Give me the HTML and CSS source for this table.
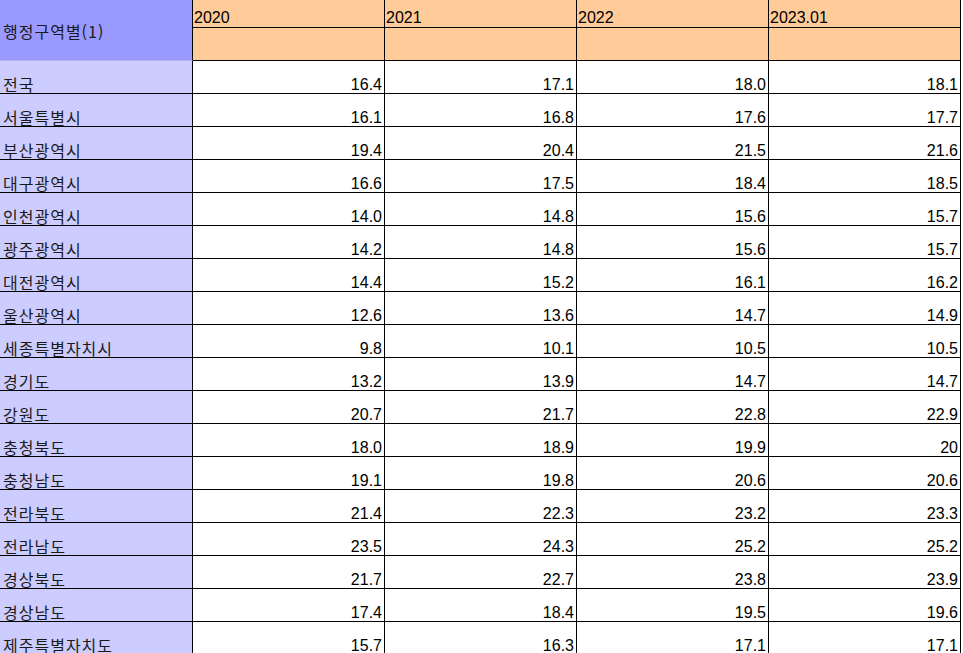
FILE: index.html
```html
<!DOCTYPE html>
<html lang="ko">
<head>
<meta charset="utf-8">
<title>행정구역별</title>
<link rel="stylesheet" href="styles.css">
</head>
<body>
<div class="sheet">
  <div class="cell corner">행정구역별(1)</div>
  <div class="cell year">2020</div>
  <div class="cell year">2021</div>
  <div class="cell year">2022</div>
  <div class="cell year">2023.01</div>
  <div class="cell unit"></div>
  <div class="cell unit"></div>
  <div class="cell unit"></div>
  <div class="cell unit"></div>

  <div class="cell label">전국</div><div class="cell num">16.4</div><div class="cell num">17.1</div><div class="cell num">18.0</div><div class="cell num">18.1</div>
  <div class="cell label">서울특별시</div><div class="cell num">16.1</div><div class="cell num">16.8</div><div class="cell num">17.6</div><div class="cell num">17.7</div>
  <div class="cell label">부산광역시</div><div class="cell num">19.4</div><div class="cell num">20.4</div><div class="cell num">21.5</div><div class="cell num">21.6</div>
  <div class="cell label">대구광역시</div><div class="cell num">16.6</div><div class="cell num">17.5</div><div class="cell num">18.4</div><div class="cell num">18.5</div>
  <div class="cell label">인천광역시</div><div class="cell num">14.0</div><div class="cell num">14.8</div><div class="cell num">15.6</div><div class="cell num">15.7</div>
  <div class="cell label">광주광역시</div><div class="cell num">14.2</div><div class="cell num">14.8</div><div class="cell num">15.6</div><div class="cell num">15.7</div>
  <div class="cell label">대전광역시</div><div class="cell num">14.4</div><div class="cell num">15.2</div><div class="cell num">16.1</div><div class="cell num">16.2</div>
  <div class="cell label">울산광역시</div><div class="cell num">12.6</div><div class="cell num">13.6</div><div class="cell num">14.7</div><div class="cell num">14.9</div>
  <div class="cell label">세종특별자치시</div><div class="cell num">9.8</div><div class="cell num">10.1</div><div class="cell num">10.5</div><div class="cell num">10.5</div>
  <div class="cell label">경기도</div><div class="cell num">13.2</div><div class="cell num">13.9</div><div class="cell num">14.7</div><div class="cell num">14.7</div>
  <div class="cell label">강원도</div><div class="cell num">20.7</div><div class="cell num">21.7</div><div class="cell num">22.8</div><div class="cell num">22.9</div>
  <div class="cell label">충청북도</div><div class="cell num">18.0</div><div class="cell num">18.9</div><div class="cell num">19.9</div><div class="cell num">20</div>
  <div class="cell label">충청남도</div><div class="cell num">19.1</div><div class="cell num">19.8</div><div class="cell num">20.6</div><div class="cell num">20.6</div>
  <div class="cell label">전라북도</div><div class="cell num">21.4</div><div class="cell num">22.3</div><div class="cell num">23.2</div><div class="cell num">23.3</div>
  <div class="cell label">전라남도</div><div class="cell num">23.5</div><div class="cell num">24.3</div><div class="cell num">25.2</div><div class="cell num">25.2</div>
  <div class="cell label">경상북도</div><div class="cell num">21.7</div><div class="cell num">22.7</div><div class="cell num">23.8</div><div class="cell num">23.9</div>
  <div class="cell label">경상남도</div><div class="cell num">17.4</div><div class="cell num">18.4</div><div class="cell num">19.5</div><div class="cell num">19.6</div>
  <div class="cell label">제주특별자치도</div><div class="cell num">15.7</div><div class="cell num">16.3</div><div class="cell num">17.1</div><div class="cell num">17.1</div>
</div>
</body>
</html>
```
FILE: styles.css
```css
html, body {
  margin: 0;
  padding: 0;
  background: #ffffff;
}

.sheet {
  display: grid;
  grid-template-columns: 193px 192px 192px 192px 192px;
  grid-template-rows: 28px 33px;
  grid-auto-rows: 33px;
  width: 961px;
  font-family: "Liberation Sans", Arial, "Noto Sans CJK KR", sans-serif;
  font-size: 16px;
  color: #000;
}

.cell {
  box-sizing: border-box;
  border-right: 1px solid #000;
  border-bottom: 1px solid #000;
  display: flex;
  align-items: flex-end;
  line-height: 17px;
  white-space: nowrap;
}

.corner {
  grid-row: 1 / span 2;
  background: #9999ff;
  border-bottom-color: #b4b4e6;
  align-items: center;
  padding-left: 3px;
  padding-top: 1px;
  font-family: "Noto Sans CJK KR", sans-serif;
  font-size: 16px;
  line-height: 22px;
  letter-spacing: 1px;
  color: #1a1a1a;
}

.year {
  background: #ffcc99;
  padding-left: 1px;
  padding-bottom: 1px;
}

.unit {
  background: #ffcc99;
}

.label {
  background: #ccccff;
  padding-left: 3px;
  padding-bottom: 0;
  font-family: "Noto Sans CJK KR", sans-serif;
  font-size: 16px;
  line-height: 18px;
  letter-spacing: 1px;
  color: #1a1a1a;
}

.num {
  background: #ffffff;
  justify-content: flex-end;
  padding-right: 2px;
}
```
